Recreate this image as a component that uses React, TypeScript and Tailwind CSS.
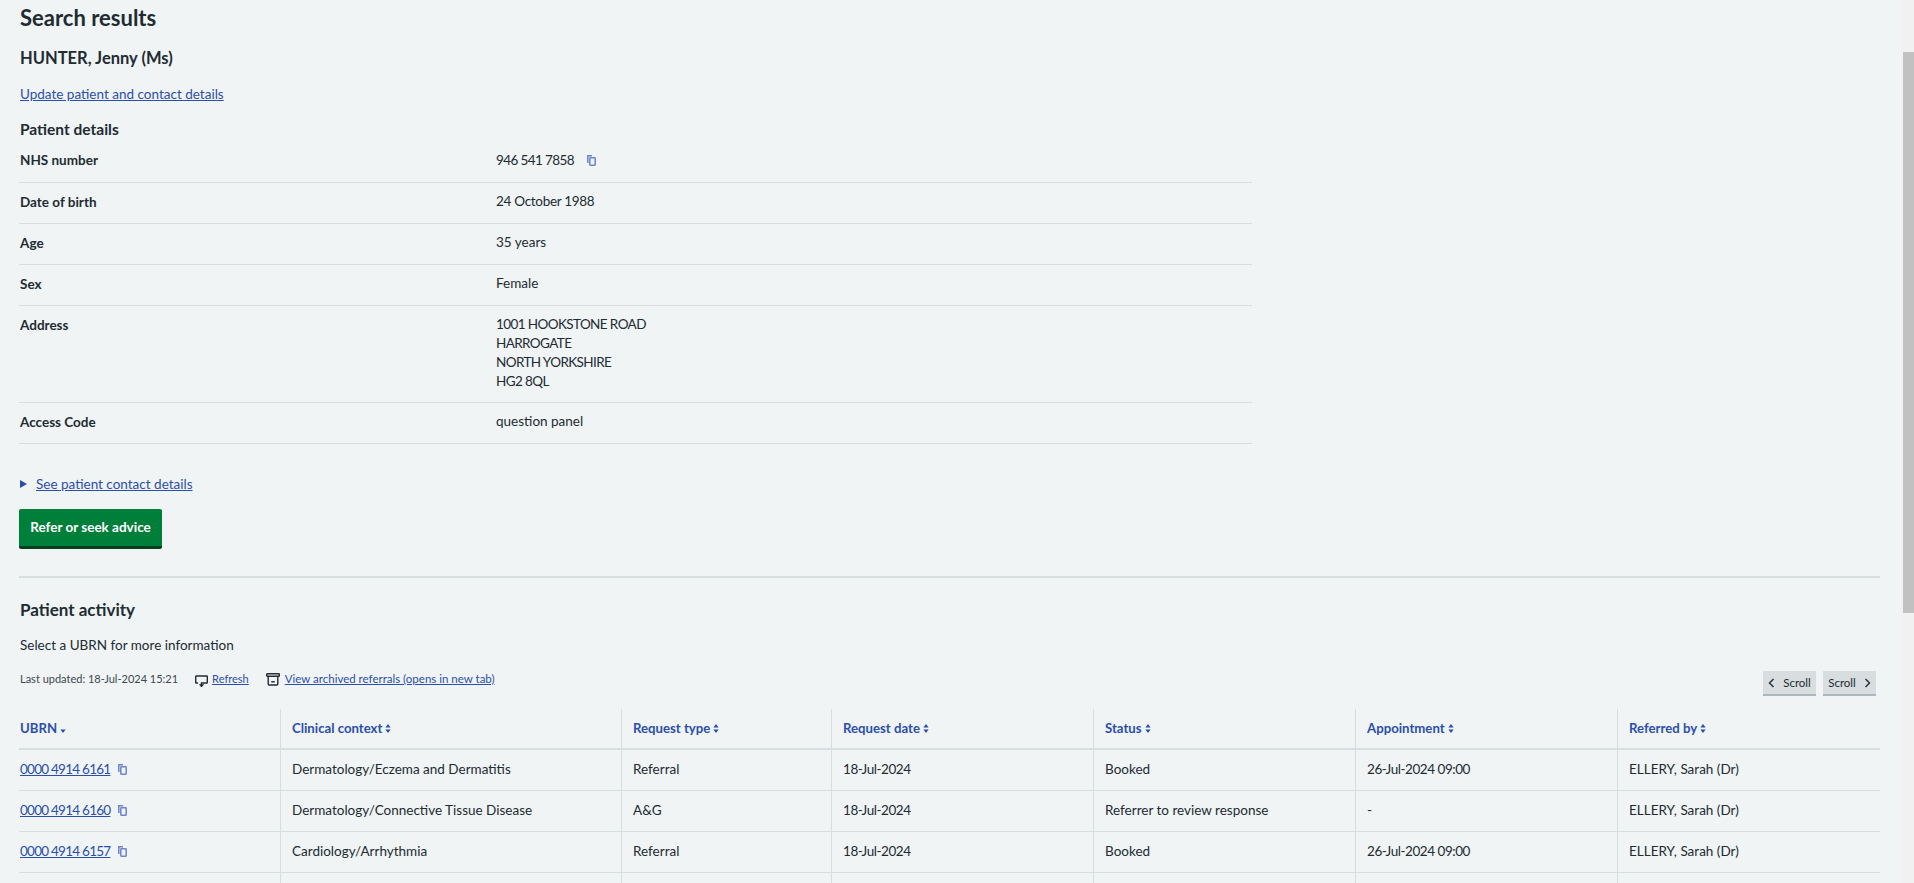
function Copy({ className = "" }: { className?: string }) {
  return (
    <svg width="9" height="11" viewBox="0 0 9 11" fill="none" stroke="#6b84cf" strokeWidth="1.5" className={className}>
      <path d="M0.8 8V0.8H5" />
      <rect x="2.8" y="2.8" width="5.4" height="7.4" rx="0.6" />
    </svg>
  );
}

function Sort({ only }: { only?: boolean }) {
  return (
    <svg width="6" height="11" viewBox="0 0 6 11" className="ml-[3px] inline-block" fill="#2b4fa8">
      {!only && <path d="M3 1L5.6 4.5H.4z" />}
      <path d="M3 10L5.6 6.5H.4z" />
    </svg>
  );
}

const details: [string, string[], number, string][] = [
  ["Date of birth", ["24 October 1988"], 41, "tracking-[-0.3px]"],
  ["Age", ["35 years"], 41, ""],
  ["Sex", ["Female"], 41, ""],
  ["Address", ["1001 HOOKSTONE ROAD", "HARROGATE", "NORTH YORKSHIRE", "HG2 8QL"], 97, "tracking-[-0.6px]"],
  ["Access Code", ["question panel"], 41, ""],
];

const cols = [
  ["UBRN", "w-[261px]"],
  ["Clinical context", "w-[341px]"],
  ["Request type", "w-[210px]"],
  ["Request date", "w-[262px]"],
  ["Status", "w-[262px]"],
  ["Appointment", "w-[262px]"],
  ["Referred by", "flex-1"],
];

const rows = [
  ["0000 4914 6161", "Dermatology/Eczema and Dermatitis", "Referral", "18-Jul-2024", "Booked", "26-Jul-2024 09:00", "ELLERY, Sarah (Dr)"],
  ["0000 4914 6160", "Dermatology/Connective Tissue Disease", "A&G", "18-Jul-2024", "Referrer to review response", "-", "ELLERY, Sarah (Dr)"],
  ["0000 4914 6157", "Cardiology/Arrhythmia", "Referral", "18-Jul-2024", "Booked", "26-Jul-2024 09:00", "ELLERY, Sarah (Dr)"],
  ["", "", "", "", "", "", ""],
];

export default function App() {
  return (
    <div className="flex h-[883px] overflow-hidden bg-[#f0f4f5] font-['Lato',sans-serif] text-[13.5px] text-[#212b32]">
      <main className="min-w-0 flex-1 pl-[19px] pr-[21px]">
        <h1 className="mt-[2px] h-[33px] pl-px text-[22px] leading-[32px] font-bold">Search results</h1>
        <h2 className="mt-[11px] h-[24px] pl-px text-[16.5px] leading-[24px] font-bold">HUNTER, Jenny (Ms)</h2>
        <a href="#" className="mt-[14px] block h-[20px] pl-px leading-[20px] text-[#2b4fa8] underline">Update patient and contact details</a>
        <h3 className="mt-[14px] h-[24px] pl-px text-[15.5px] leading-[22px] font-bold">Patient details</h3>
        <div className="w-[1233px]">
          <div className="flex h-[41px] border-b border-[#d8dde0] pt-[8px]">
            <div className="w-[477px] pl-px font-bold leading-[20px]">NHS number</div>
            <div className="flex items-center gap-[13px] self-start leading-[20px]">
              <span className="tracking-[-0.6px]">946 541 7858</span>
              <Copy />
            </div>
          </div>
          {details.map(([k, v, h, t]) => (
            <div key={k} className="flex border-b border-[#d8dde0] pt-[9px]" style={{ height: h }}>
              <div className="w-[477px] pl-px font-bold leading-[20px]">{k}</div>
              <div className={`leading-[19px] ${t}`}>{v.map((l) => <div key={l}>{l}</div>)}</div>
            </div>
          ))}
        </div>
        <div className="mt-[30px] flex h-[20px] items-center pl-px">
          <span className="mr-[9px] h-0 w-0 border-y-[4px] border-l-[7px] border-y-transparent border-l-[#2b4fa8]" />
          <a href="#" className="leading-[20px] text-[#2b4fa8] underline">See patient contact details</a>
        </div>
        <button className="mt-[15px] block h-[40px] w-[143px] rounded-[2px] border-b-[3px] border-[#00401e] bg-[#007f3b] text-[13.5px] font-bold text-white">Refer or seek advice</button>
        <hr className="mt-[27px] border-0 border-t-2 border-[#d8dde0]" />
        <h2 className="mt-[20px] h-[24px] pl-px text-[17px] leading-[24px] font-bold">Patient activity</h2>
        <p className="mt-[13px] h-[20px] pl-px leading-[20px]">Select a UBRN for more information</p>
        <div className="flex items-start justify-between pt-[13px]">
          <div className="mt-[1px] flex h-[20px] items-center pl-px text-[11px] leading-[20px]">
            <span className="text-[#3d474e]">Last updated: 18-Jul-2024 15:21</span>
            <svg width="13" height="12" viewBox="0 0 13 12" fill="none" stroke="#212b32" strokeWidth="1.4" className="ml-[17px] mt-[3px]">
              <path d="M3 8H1.2a.5.5 0 0 1-.5-.5V1.5a.5.5 0 0 1 .5-.5h10.6a.5.5 0 0 1 .5.5v6a.5.5 0 0 1-.5.5H6.5V11" />
              <path d="M4.6 9.3l1.9 2 1.9-2" />
            </svg>
            <a href="#" className="ml-[4px] text-[#2b4fa8] underline">Refresh</a>
            <svg width="14" height="13" viewBox="0 0 14 13" fill="none" stroke="#212b32" strokeWidth="1.4" className="ml-[17px]">
              <rect x="0.7" y="0.7" width="12.6" height="2.6" rx="0.6" />
              <path d="M2.2 3.3V11a1 1 0 0 0 1 1h7.6a1 1 0 0 0 1-1V3.3" />
              <path d="M5.2 8.8h3.6" />
            </svg>
            <a href="#" className="ml-[5px] text-[11.5px] text-[#2b4fa8] underline">View archived referrals (opens in new tab)</a>
          </div>
          <div className="mr-[4px] mt-[3px] flex gap-[7px] text-[11.5px]">
            <button className="flex h-[25px] w-[53px] items-center justify-center gap-[8px] border-b-2 border-[#aeb7bd] bg-[#d8dde0]">
              <svg width="7" height="10" viewBox="0 0 7 10" fill="none" stroke="#212b32" strokeWidth="1.4"><path d="M5.5 1L1.5 5l4 4" /></svg>
              Scroll
            </button>
            <button className="flex h-[25px] w-[53px] items-center justify-center gap-[8px] border-b-2 border-[#aeb7bd] bg-[#d8dde0]">
              Scroll
              <svg width="7" height="10" viewBox="0 0 7 10" fill="none" stroke="#212b32" strokeWidth="1.4"><path d="M1.5 1l4 4-4 4" /></svg>
            </button>
          </div>
        </div>
        <div className="mt-[13px] flex h-[41px] border-b-2 border-[#d8dde0] text-[13.2px] text-[#2b4fa8]">
          {cols.map(([label, w], i) => (
            <div key={label} className={`${w} flex items-center font-bold ${i ? "border-l border-[#d8dde0] pl-[11px]" : "pl-px"}`}>
              {label}<Sort only={i === 0} />
            </div>
          ))}
        </div>
        {rows.map((r, n) => (
          <div key={n} className="flex h-[41px] border-b border-[#d8dde0]">
            {r.map((c, i) => (
              <div key={i} className={`${cols[i][1]} flex items-center pb-[2px] ${i ? "border-l border-[#d8dde0] pl-[11px]" : "pl-px"} ${i === 3 || i === 5 ? "tracking-[-0.45px]" : ""}`}>
                {i === 0 && c ? (
                  <>
                    <a href="#" className="tracking-[-0.75px] text-[#2b4fa8] underline">{c}</a>
                    <Copy className="ml-[8px]" />
                  </>
                ) : c}
              </div>
            ))}
          </div>
        ))}
      </main>
      <aside className="w-[13px] shrink-0 bg-[#f1f1f1] pl-[2px]">
        <div className="mt-[52px] h-[561px] bg-[#c1c1c1]" />
      </aside>
    </div>
  );
}
